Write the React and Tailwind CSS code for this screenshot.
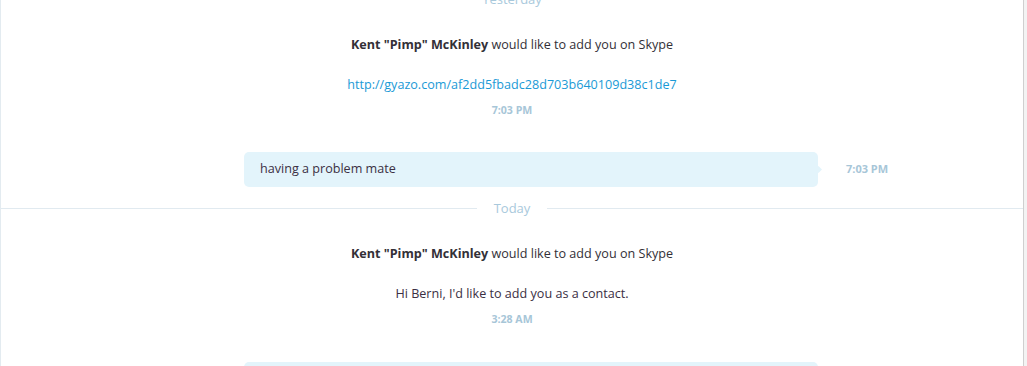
const Divider = ({ label, className }) => (
  <div className={"flex items-center " + className}>
    <div className="flex-1 h-px bg-[#e1eaf0]" />
    <span className="px-[17px] text-[13px] leading-[16px] text-[#a9c9dc]">{label}</span>
    <div className="flex-1 h-px bg-[#e1eaf0]" />
  </div>
);

const Bubble = ({ text, time, className }) => (
  <div className={"flex items-center " + className}>
    <div className="relative ml-[243px] w-[574px] h-[35px] rounded-[5px] bg-[#e3f4fb] flex items-center pl-4 text-[12.6px] text-[#3b3043]">
      {text}
      <span className="absolute -right-[3px] top-[15px] w-[5px] h-[5px] rotate-45 bg-[#e3f4fb]" />
    </div>
    {time && (
      <span className="ml-[28px] text-[11px] font-bold text-[#a7c6d8]">{time}</span>
    )}
  </div>
);

const Request = ({ body, link, time, className }) => (
  <div className={"flex flex-col items-center " + className}>
    <p className="text-[12.6px] leading-[18px] text-[#333037]">
      <span className="font-bold">Kent "Pimp" McKinley</span> would like to add you on Skype
    </p>
    {link ? (
      <p className="mt-[22px] text-[12.6px] leading-[18px] text-[#1a9ad6]">{link}</p>
    ) : (
      <p className="mt-[22px] text-[12.6px] leading-[18px] text-[#3b3043]">{body}</p>
    )}
    <p className="mt-[9px] text-[10.6px] leading-[14px] font-bold text-[#a7c6d8]">{time}</p>
  </div>
);

export default function App() {
  return (
    <div className="w-[1027px] h-[366px] overflow-hidden flex bg-white" style={{ fontFamily: '"Open Sans", "Noto Sans", sans-serif' }}>
      <div className="flex-1 border-l border-[#e3ebf0] flex flex-col">
        <Divider label="Yesterday" className="-mt-[9px]" />
        <Request link="http://gyazo.com/af2dd5fbadc28d703b640109d38c1de7" time="7:03 PM" className="mt-[29px]" />
        <Bubble text="having a problem mate" time="7:03 PM" className="mt-[35px]" />
        <Divider label="Today" className="mt-[13px]" />
        <Request body="Hi Berni, I'd like to add you as a contact." time="3:28 AM" className="mt-[29px]" />
        <Bubble text="" className="mt-[36px]" />
      </div>
      <div className="w-[4px] border-l border-[#cfcfcf] bg-[#f3f3f3]" />
    </div>
  );
}
